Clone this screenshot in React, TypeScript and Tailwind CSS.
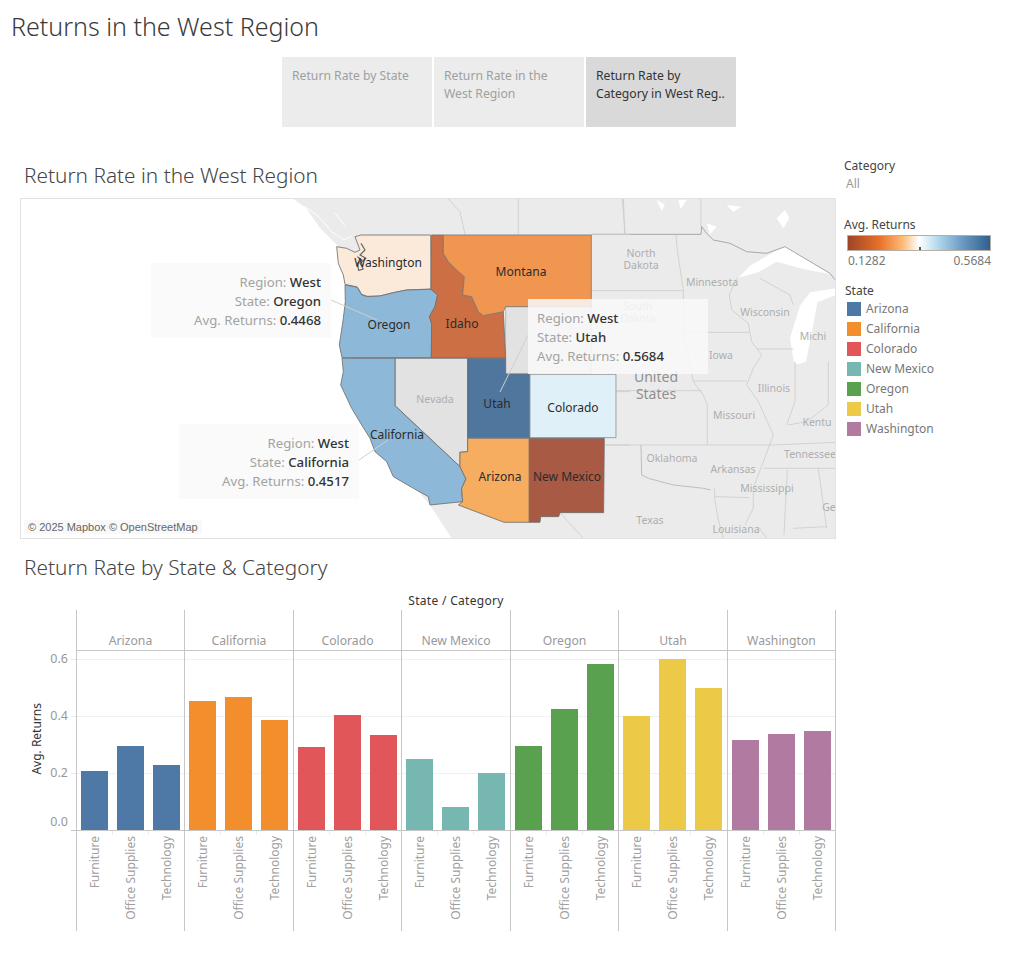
import React from "react";

const font = "font-['Noto_Sans',sans-serif]";

const states = [
  { name: "Arizona", color: "#4e79a7", bars: [59, 84, 65], width: "w-[108px]" },
  { name: "California", color: "#f28e2b", bars: [129, 133, 110], width: "w-[109px]" },
  { name: "Colorado", color: "#e15759", bars: [83, 115, 95], width: "w-[108px]" },
  { name: "New Mexico", color: "#76b7b2", bars: [71, 23, 57], width: "w-[109px]" },
  { name: "Oregon", color: "#59a14f", bars: [84, 121, 166], width: "w-[108px]" },
  { name: "Utah", color: "#edc948", bars: [114, 171, 142], width: "w-[109px]" },
  { name: "Washington", color: "#b07aa1", bars: [90, 96, 99], width: "w-[109px]" },
];

const categories = ["Furniture", "Office Supplies", "Technology"];

// background place names, page coordinates
const mapLabels: [string, number, number][] = [
  ["North", 641, 257],
  ["Dakota", 641, 269],
  ["South", 638, 310],
  ["Dakota", 638, 322],
  ["Minnesota", 712, 286],
  ["Wisconsin", 765, 316],
  ["Iowa", 721, 359],
  ["Illinois", 774, 392],
  ["Missouri", 734, 419],
  ["Oklahoma", 672, 462],
  ["Arkansas", 733, 473],
  ["Mississippi", 767, 492],
  ["Texas", 650, 524],
  ["Louisiana", 736, 533],
  ["Tennessee", 810, 458],
  ["Kentu", 817, 426],
  ["Michi", 813, 340],
  ["Ge", 829, 511],
];

const stateLabels: [string, number, number][] = [
  ["Washington", 388, 267],
  ["Montana", 521, 276],
  ["Oregon", 389, 329],
  ["Idaho", 462, 328],
  ["Utah", 497, 408],
  ["Colorado", 573, 412],
  ["California", 397, 439],
  ["Arizona", 500, 481],
  ["New Mexico", 567, 481],
];

function MapDrawing() {
  return (
    <svg viewBox="20 198 816 341" className="block h-[341px] w-[816px]">
      <rect x="20" y="198" width="816" height="341" fill="#ffffff" />
      {/* land */}
      <path d="M292 198 L306 208 L320 228 L337 245 L350 262 L352 380 L400 470 L430 505 L452 539 L836 539 L836 198 Z" fill="#ebebeb" />
      <path d="M304 206 L318 216 L332 232 L344 240 L352 236 M335 213 L345 226" fill="none" stroke="#ffffff" strokeWidth="1" />

      {/* east side, coordinates of the 3x crop */}
      <g transform="translate(590 195) scale(0.3333)">
        <path d="M445 248 L480 212 L550 172 L585 155 L660 200 L722 238 L640 222 L560 200 L505 232 Z" fill="#ffffff" />
        <path d="M612 503 L600 430 L630 332 L660 292 L738 280 L738 300 L682 322 L668 400 L648 500 L625 508 Z" fill="#ffffff" />
        <path d="M200 14 L225 30 L215 48 Z M265 14 L290 14 L272 42 Z M560 70 L585 45 L598 70 L580 100 Z M410 30 L455 35 L430 50 Z M350 85 L380 95 L360 118 Z" fill="#ffffff" />
        <g fill="none" stroke="#cdcdcd" strokeWidth="2.5">
          <path d="M97 12 L105 118 M333 12 L333 95" />
          <path d="M258 120 L262 165 L280 285 L280 410 L310 560 L340 600 L352 630 L352 750" />
          <path d="M5 287 L280 287 M280 412 L480 412 M310 558 L470 558 M80 587 L335 587 M45 750 L352 750" />
          <path d="M440 250 L418 300 L425 345 L475 385 L485 440 L515 480 L490 520 L470 570 L505 620 L550 720 L520 800 L490 880 L490 940 L465 990" />
          <path d="M500 462 L610 462 M615 500 L615 620 L590 690 M715 500 L715 630 L650 680 L595 690" />
          <path d="M352 750 L550 750 L738 742 M520 820 L738 820 M592 825 L582 1020 M685 820 L710 1000 M610 1000 L710 995" />
          <path d="M373 880 L375 905 L478 908 M373 905 L385 975 L400 1030 M505 995 L530 1030" />
          <path d="M510 250 L600 300 L610 330" />
        </g>
        <path d="M153 750 L155 840 L175 850 L250 870 L340 880 L362 885" fill="none" stroke="#b4b4b4" strokeWidth="2.5" />
        <path d="M5 118 L333 118 L335 95 L350 115 L370 135 L420 145 L470 170 L530 175 L585 155 L720 235 L738 258" fill="none" stroke="#9a9a9a" strokeWidth="2.5" />
      </g>

      {mapLabels.map(([t, x, y]) => (
        <text key={t + y} x={x} y={y} textAnchor="middle" fontSize="10.5" fill="#aeaeae" fontFamily="Noto Sans, sans-serif">
          {t}
        </text>
      ))}
      <text x="656" y="382" textAnchor="middle" fontSize="14" fill="#8f8f8f" fontFamily="Noto Sans, sans-serif">United</text>
      <text x="656" y="399" textAnchor="middle" fontSize="14" fill="#8f8f8f" fontFamily="Noto Sans, sans-serif">States</text>

      {/* west side, coordinates of the 3x crop */}
      <g transform="translate(280 195) scale(0.3333)" fill="none" stroke="#cdcdcd" strokeWidth="2.5">
        <path d="M505 12 L540 50 L555 118 M715 12 L715 118 M1030 12 L1035 118 M1008 590 L1050 590 M975 750 L1050 750 M840 953 L910 1030 M934 118 L1050 118" />
      </g>
      <g transform="translate(280 195) scale(0.3333)" stroke="#6f6f6f" strokeWidth="2.5" strokeLinejoin="round">
        <path fill="#e2e2e2" stroke="#b0b0b0" d="M677 335 L934 335 L934 537 L677 537 Z" />
        <path fill="#fbe9da" d="M243 120 L452 120 L453 282 L380 285 L340 293 L300 303 L262 304 L245 298 L232 276 L195 268 L190 240 L175 205 L170 155 L200 160 L225 172 L240 165 L225 125 Z" />
        <path fill="none" strokeWidth="3.5" stroke="#666666" d="M243 145 L255 165 L240 180 L258 190 L240 205 L250 222 L236 226 L232 205 L246 195 L232 185" />
        <path fill="#8db8d8" d="M195 270 L232 277 L245 300 L262 305 L300 303 L340 293 L380 285 L453 283 L473 300 L465 335 L448 365 L455 385 L454 488 L186 488 L178 450 L190 370 L196 320 Z" />
        <path fill="#cc6f45" d="M455 120 L490 120 L490 175 L505 200 L530 225 L553 245 L548 300 L575 305 L595 350 L610 362 L670 350 L677 488 L454 488 L455 385 L448 365 L465 335 L473 300 L453 283 Z" />
        <path fill="#f19650" stroke="#7a7a7a" d="M490 120 L934 120 L934 335 L677 335 L670 350 L610 362 L595 350 L575 305 L548 300 L553 245 L530 225 L505 200 L490 175 Z" />
        <path fill="#e2e2e2" d="M345 490 L563 490 L563 770 L540 772 L540 815 L345 632 Z" />
        <path fill="#8db8d8" d="M186 490 L345 490 L345 632 L540 815 L545 825 L558 852 L545 880 L548 920 L450 930 L445 905 L400 880 L340 845 L320 800 L285 770 L270 730 L245 690 L215 640 L182 570 L190 530 Z" />
        <path fill="#4f769c" d="M563 490 L677 490 L677 537 L750 537 L750 728 L563 728 Z" />
        <path fill="#e0f0f8" stroke="#8f8f8f" d="M750 538 L1008 538 L1008 728 L750 728 Z" />
        <path fill="#f6ad5f" d="M563 730 L748 730 L748 982 L672 982 L535 930 L548 920 L545 880 L558 852 L545 825 L540 815 L540 772 L563 770 Z" />
        <path fill="#a85a44" d="M748 730 L973 730 L971 953 L840 953 L836 965 L782 965 L780 982 L748 982 Z" />
      </g>
      <text x="435" y="403" textAnchor="middle" fontSize="10.5" fill="#aeaeae" fontFamily="Noto Sans, sans-serif">Nevada</text>

      <path d="M331 300 L377 320 M359 460 L388 440 M528 335 L500 392" fill="none" stroke="#cfcfcf" strokeWidth="1" />

      {stateLabels.map(([t, x, y]) => (
        <text key={t} x={x} y={y} textAnchor="middle" fontSize="12" fill="#2b2b2b" fontFamily="Noto Sans, sans-serif">
          {t}
        </text>
      ))}
      <rect x="20.5" y="198.5" width="815" height="340" fill="none" stroke="#e2e2e2" />
    </svg>
  );
}

function Note({ state, value, className }: { state: string; value: string; className: string }) {
  return (
    <div className={`absolute flex h-[75px] w-[180px] flex-col justify-center bg-[#f9f9f9]/85 pt-[1px] text-[13.2px] leading-[19px] text-[#a3a3a3] ${className}`}>
      <div>Region: <span className="font-medium text-[#333]">West</span></div>
      <div>State: <span className="font-medium text-[#333]">{state}</span></div>
      <div>Avg. Returns: <span className="font-medium text-[#333]">{value}</span></div>
    </div>
  );
}

function Chart() {
  return (
    <div className="flex">
      {/* y axis */}
      <div className="relative h-[321px] w-[76px] shrink-0">
        <div className="absolute left-[29px] top-[93px] text-[12px] leading-[16px] text-[#333] [writing-mode:vertical-rl] rotate-180">Avg. Returns</div>
        <div className="flex flex-col items-end pt-[21px] text-[12.5px] text-[#999]">
          {["0.6", "0.4", "0.2"].map((t) => (
            <div key={t} className="flex h-[57px] items-center justify-end gap-[1px]">
              <span className="pr-[2px]">{t}</span>
              <span className="h-px w-[5px] bg-[#e9e9e9]" />
            </div>
          ))}
          <div className="mt-[12px] flex h-[16px] items-center pr-[8px]">0.0</div>
        </div>
        <div className="absolute left-[71px] top-[220px] h-px w-[5px] bg-[#c6c6c6]" />
      </div>

      {/* one panel for each state */}
      {states.map((s, i) => (
        <div
          key={s.name}
          className={`${s.width} h-[321px] shrink-0 border-l border-[#c6c6c6] ${i === states.length - 1 ? "border-r" : ""}`}
        >
          <div className="flex h-[41px] items-end justify-center border-b border-[#c6c6c6] text-[12.2px] leading-[18px] text-[#999]">
            {s.name}
          </div>
          <div className="relative flex h-[180px] items-end gap-[9px] border-b border-[#c6c6c6] pl-[4px]">
            <div className="absolute inset-x-0 top-[8px] h-px bg-[#f1f1f1]" />
            <div className="absolute inset-x-0 top-[65px] h-px bg-[#f1f1f1]" />
            <div className="absolute inset-x-0 top-[122px] h-px bg-[#f1f1f1]" />
            {s.bars.map((h, j) => (
              <div key={j} className="relative w-[27px]" style={{ height: h, backgroundColor: s.color }} />
            ))}
          </div>
          <div className="flex h-[100px] gap-[9px] pl-[4px]">
            {categories.map((c, j) => (
              <div key={c} className="relative flex w-[27px] justify-center pt-[5px]">
                <span className="h-max text-[12px] leading-[16px] text-[#a0a0a0] [writing-mode:vertical-rl] rotate-180">{c}</span>
                {j < 2 && <span className="absolute -right-[5px] top-0 h-[4px] w-px bg-[#ececec]" />}
              </div>
            ))}
          </div>
        </div>
      ))}
    </div>
  );
}

export default function App() {
  return (
    <div className={`h-[963px] w-[1015px] overflow-hidden bg-white text-[#333] ${font}`}>
      <h1 className="h-[57px] pl-[11px] pt-[9px] text-[25px] font-light leading-[34px] text-[#3a3a3a]">Returns in the West Region</h1>

      {/* dashboard tabs */}
      <div className="ml-[282px] flex gap-[2px]">
        <div className="h-[70px] w-[150px] bg-[#ececec] px-[10px] pt-[10px] text-[12.2px] leading-[18px] text-[#a0a0a0]">Return Rate by State</div>
        <div className="h-[70px] w-[150px] bg-[#ececec] px-[10px] pt-[10px] text-[12.2px] leading-[18px] text-[#a0a0a0]">Return Rate in the West Region</div>
        <div className="h-[70px] w-[150px] bg-[#d9d9d9] px-[10px] pt-[10px] text-[12.2px] leading-[18px] text-[#333]">Return Rate by Category in West Reg..</div>
      </div>

      {/* map and legends */}
      <div className="mt-[33px] flex">
        <div className="ml-[20px] w-[816px] shrink-0">
          <h2 className="h-[38px] pl-[4px] pt-[1px] text-[20.8px] font-light leading-[28px] text-[#444]">Return Rate in the West Region</h2>
          <div className="relative h-[341px] w-[816px]">
            <MapDrawing />
            <Note state="Oregon" value="0.4468" className="left-[131px] top-[65px] items-end pr-[10px]" />
            <Note state="California" value="0.4517" className="left-[159px] top-[226px] items-end pr-[10px]" />
            <Note state="Utah" value="0.5684" className="left-[508px] top-[101px] pl-[9px]" />
            <div className="absolute left-[4px] top-[322px] bg-[#f8f8f8]/80 px-[4px] font-['Liberation_Sans',sans-serif] text-[11px] leading-[14px] text-[#666]">© 2025 Mapbox © OpenStreetMap</div>
          </div>
        </div>

        <div className="-mt-[2px] ml-[8px] w-[170px] text-[12px]">
          <div className="leading-[16px] text-[#444]">Category</div>
          <div className="mt-[2px] pl-[2px] leading-[16px] text-[#999]">All</div>

          <div className="mt-[25px] leading-[16px] text-[#444]">Avg. Returns</div>
          <div className="relative ml-[3px] mt-[2px] h-[16px] w-[144px] border border-[#b8b0a4] bg-[linear-gradient(to_right,#9c4526,#e8702a_22%,#fdb873_38%,#ffffff_50%,#b9dcee_62%,#6c9cc4_80%,#2f5f8e)]">
            <span className="absolute bottom-0 left-[71px] h-[3px] w-[2px] bg-[#555]" />
          </div>
          <div className="ml-[4px] mt-[2px] flex w-[143px] justify-between leading-[16px] text-[#777]">
            <span>0.1282</span>
            <span>0.5684</span>
          </div>

          <div className="mt-[14px] pl-[1px] leading-[16px] text-[#444]">State</div>
          <div className="flex flex-col">
            {states.map((s) => (
              <div key={s.name} className="flex h-[20px] items-center gap-[5px] pl-[3px]">
                <span className="h-[14px] w-[14px]" style={{ backgroundColor: s.color }} />
                <span className="leading-[16px] text-[#777]">{s.name}</span>
              </div>
            ))}
          </div>
        </div>
      </div>

      {/* bars */}
      <h2 className="mt-[14px] h-[40px] pl-[24px] text-[20.8px] font-light leading-[28px] text-[#444]">Return Rate by State &amp; Category</h2>
      <div className="ml-[76px] w-[760px] text-center text-[12px] leading-[16px] tracking-[0.3px] text-[#333]">State / Category</div>
      <div className="mt-[1px]">
        <Chart />
      </div>
    </div>
  );
}
